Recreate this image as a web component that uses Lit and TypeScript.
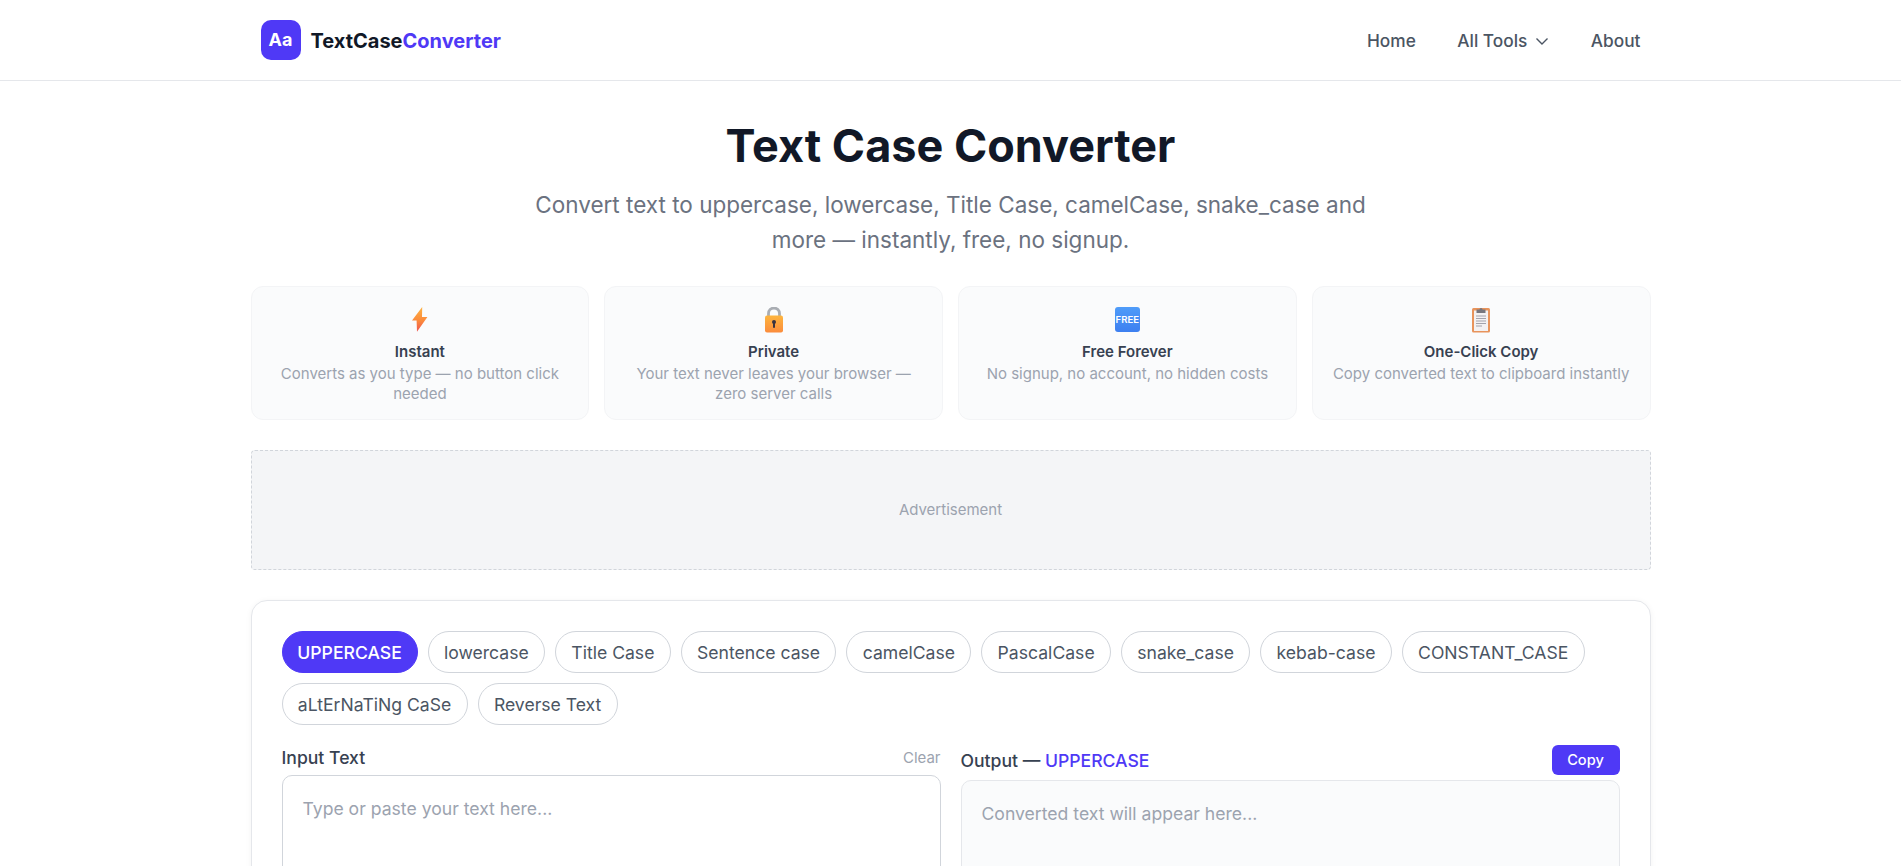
import { LitElement, html, css, svg } from "lit";
import { customElement } from "lit/decorators.js";

const modes = ["UPPERCASE","lowercase","Title Case","Sentence case","camelCase","PascalCase","snake_case","kebab-case","CONSTANT_CASE","aLtErNaTiNg CaSe","Reverse Text"];

const bolt = html`<svg width="16" height="25" viewBox="0 0 16 25"><defs><linearGradient id="b" x1="0" y1="0" x2="0" y2="1"><stop offset="0" stop-color="#fdb241"/><stop offset=".55" stop-color="#fb8a3c"/><stop offset="1" stop-color="#ef5350"/></linearGradient></defs><path d="M10.2 0 L0 13.6 H4.6 L5 24.8 L15.4 10 H10 Z" fill="url(#b)"/></svg>`;
const lock = html`<svg width="20" height="26" viewBox="0 0 20 26"><defs><linearGradient id="l" x1="0" y1="0" x2="0" y2="1"><stop offset="0" stop-color="#fdb53e"/><stop offset="1" stop-color="#fb8c3c"/></linearGradient></defs><path d="M4.5 10 V6.5 a5.5 5.5 0 0 1 11 0 V10" fill="none" stroke="#a9adb3" stroke-width="2.8"/><rect x="1" y="8.5" width="18" height="17" rx="2" fill="url(#l)"/><circle cx="10" cy="15" r="2" fill="#3a3340"/><rect x="9" y="15" width="2" height="6" rx="1" fill="#3a3340"/></svg>`;
const clip = html`<svg width="18" height="26" viewBox="0 0 18 26"><rect x="0" y="1" width="18" height="24.5" rx="1.5" fill="#e8945c"/><rect x="2" y="3.5" width="14" height="20.5" fill="#f3f1f2"/><path d="M4.5 2.5 h3 a1.5 1.5 0 0 1 3 0 h3 V6 H4.5 Z" fill="#77767d"/>${svg`<path d="M4 9 H14 M4 11.5 H14 M4 14 H14 M4 16.5 H14 M4 19 H10" stroke="#a3a2ab" stroke-width="1"/>`}</svg>`;

const features = [
  { icon: bolt, title: "Instant", desc: "Converts as you type — no button click needed" },
  { icon: lock, title: "Private", desc: "Your text never leaves your browser — zero server calls" },
  { icon: html`<span class="free">FREE</span>`, title: "Free Forever", desc: "No signup, no account, no hidden costs" },
  { icon: clip, title: "One-Click Copy", desc: "Copy converted text to clipboard instantly" },
];

@customElement("app-root")
export class AppRoot extends LitElement {
  static styles = css`
    :host { display: block; font-family: Inter, "Liberation Sans", sans-serif; color: #1f2937; background: #fff; line-height: 1.6; }
    * { box-sizing: border-box; }
    header { height: 81px; border-bottom: 1px solid #e5e7eb; display: flex; justify-content: center; }
    .bar { width: 1400px; padding: 0 10px; display: flex; align-items: center; justify-content: space-between; }
    .brand { display: flex; align-items: center; gap: 10px; font-size: 20px; font-weight: 700; color: #111827; }
    .brand .name { padding-top: 1px; }
    .brand b { font-weight: 700; color: #4f39f6; }
    .logo { width: 40px; height: 40px; padding-top: 1px; border-radius: 10px; background: #4f39f6; color: #fff; font-size: 18px; font-weight: 700; display: flex; align-items: center; justify-content: center; }
    nav { display: flex; align-items: center; gap: 41.5px; padding-top: 2px; font-size: 17.3px; font-weight: 500; color: #4b5563; }
    nav span { display: flex; align-items: center; gap: 8px; }
    main { width: 1400px; margin: 0 auto; }
    .hero { padding-top: 37px; display: flex; flex-direction: column; align-items: center; text-align: center; }
    h1 { margin: 0; font-size: 45px; line-height: 56px; font-weight: 700; color: #111827; }
    .hero p { margin: 13px 0 0; width: 860px; font-size: 22.5px; line-height: 35px; color: #6b7280; }
    .features { display: grid; grid-template-columns: repeat(4, 1fr); gap: 15px; margin-top: 29px; }
    .feature { height: 134px; padding: 20px 16px 0; background: #fafbfc; border: 1px solid #f3f4f6; border-radius: 12px; text-align: center; display: flex; flex-direction: column; align-items: center; }
    .icon { height: 33px; display: flex; align-items: flex-start; justify-content: center; }
    .free { width: 25px; height: 25px; border-radius: 3px; background: linear-gradient(#4f9cf9, #3d7ff0); color: #fff; font-size: 9.6px; font-weight: 600; line-height: 25px; text-align: center; letter-spacing: 0; }
    .feature h3 { margin: 0; font-size: 15px; line-height: 24px; font-weight: 600; color: #374151; }
    .feature p { margin: 0; font-size: 15px; line-height: 20px; color: #9ca3af; }
    .ad { height: 120px; margin-top: 30px; background: #f4f5f7; border: 1px dashed #d1d5db; border-radius: 4px; display: flex; align-items: center; justify-content: center; font-size: 15px; color: #9ca3af; }
    .tool { margin-top: 30px; padding: 30px; border: 1px solid #e5e7eb; border-radius: 16px; box-shadow: 0 1px 6px rgba(0,0,0,.05); background: #fff; }
    .chips { display: flex; flex-wrap: wrap; gap: 10px; }
    .chip { height: 42px; padding: 2px 15.3px 0; border: 1px solid #d1d5db; border-radius: 21px; background: #fff; display: flex; align-items: center; font-size: 17.6px; font-weight: 400; color: #4b5563; }
    .chip.on { padding: 2px 14.8px 0; background: #4f39f6; border-color: #4f39f6; color: #fff; font-weight: 500; }
    .cols { display: grid; grid-template-columns: 1fr 1fr; gap: 20px; margin-top: 20px; }
    .head { display: flex; justify-content: space-between; align-items: center; font-size: 17.6px; font-weight: 500; color: #374151; }
    .head.in { height: 26px; margin-bottom: 4px; }
    .head.out { height: 30px; margin-bottom: 5px; }
    .head.out > span { padding-top: 2px; }
    .head em { font-style: normal; color: #4f39f6; }
    .clear { font-size: 15px; font-weight: 400; color: #9ca3af; }
    .copy { height: 30px; width: 68px; border: 0; border-radius: 6px; background: #4f39f6; color: #fff; font: 500 14.6px Inter, sans-serif; }
    textarea, .out-box { display: block; width: 100%; height: 260px; padding: 19px 20px 20px; border: 1px solid #d1d5db; border-radius: 10px; font: 400 17.6px/1.6 Inter, sans-serif; resize: none; outline: none; background: #fff; }
    textarea::placeholder { color: #9ca3af; opacity: 1; }
    .out-box { border-color: #e5e7eb; background: #fafbfc; color: #9ca3af; }
  `;
  render() {
    return html`
      <header><div class="bar">
        <div class="brand"><div class="logo">Aa</div><div class="name">TextCase<b>Converter</b></div></div>
        <nav><span>Home</span><span>All Tools <svg width="14" height="14" viewBox="0 0 14 14" fill="none" stroke="#4b5563" stroke-width="1.4"><path d="M1.5 4.5 L7 10 L12.5 4.5"/></svg></span><span>About</span></nav>
      </div></header>
      <main>
        <section class="hero">
          <h1>Text Case Converter</h1>
          <p>Convert text to uppercase, lowercase, Title Case, camelCase, snake_case and more — instantly, free, no signup.</p>
        </section>
        <section class="features">
          ${features.map(f => html`<div class="feature"><div class="icon">${f.icon}</div><h3>${f.title}</h3><p>${f.desc}</p></div>`)}
        </section>
        <div class="ad">Advertisement</div>
        <section class="tool">
          <div class="chips">${modes.map((m, i) => html`<div class="chip ${i === 0 ? "on" : ""}">${m}</div>`)}</div>
          <div class="cols">
            <div>
              <div class="head in"><span>Input Text</span><span class="clear">Clear</span></div>
              <textarea placeholder="Type or paste your text here..."></textarea>
            </div>
            <div>
              <div class="head out"><span>Output — <em>UPPERCASE</em></span><button class="copy">Copy</button></div>
              <div class="out-box">Converted text will appear here...</div>
            </div>
          </div>
        </section>
      </main>`;
  }
}
